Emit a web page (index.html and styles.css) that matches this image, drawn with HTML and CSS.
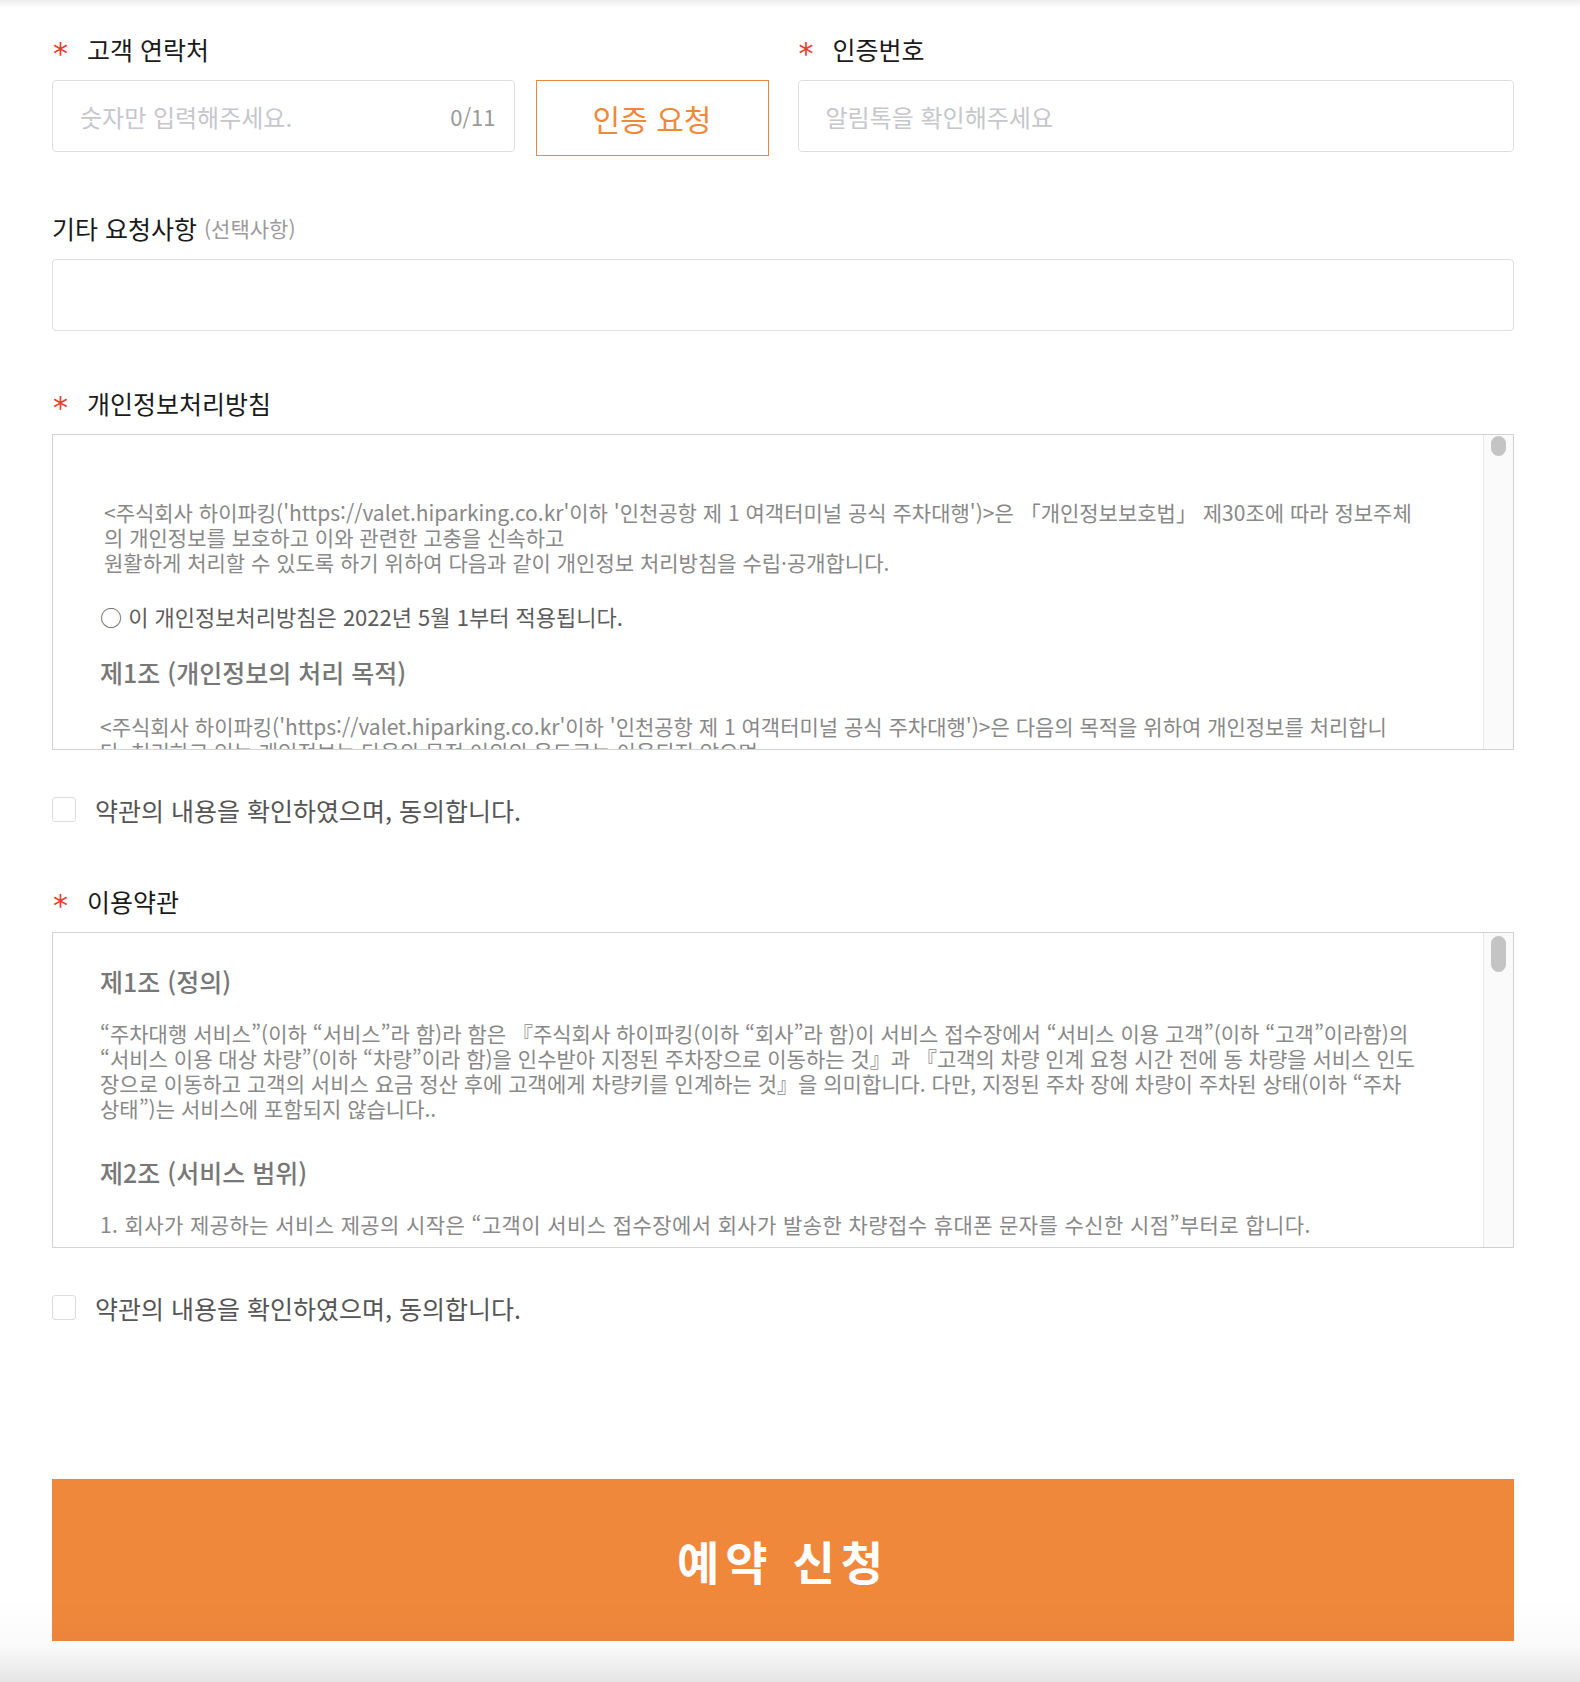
FILE: index.html
```html
<!DOCTYPE html>
<html lang="ko">
<head>
    <meta charset="UTF-8">
    <meta name="viewport" content="width=device-width, initial-scale=1.0">
    <title>주차대행 예약</title>
    <link rel="stylesheet" href="styles.css">
</head>
<body>
    <div class="page">
        <div class="row-two">
            <div class="field">
                <div class="label"><span class="req">*</span>고객 연락처</div>
                <div class="phone-row">
                    <div class="text-box">
                        <input type="text" placeholder="숫자만 입력해주세요.">
                        <span class="count">0/11</span>
                    </div>
                    <button class="auth-btn">인증 요청</button>
                </div>
            </div>
            <div class="field">
                <div class="label"><span class="req">*</span>인증번호</div>
                <div class="text-box">
                    <input type="text" placeholder="알림톡을 확인해주세요">
                </div>
            </div>
        </div>

        <div class="section">
            <div class="label">기타 요청사항 <span class="opt">(선택사항)</span></div>
            <div class="text-box">
                <input type="text">
            </div>
        </div>

        <div class="section">
            <div class="label"><span class="req">*</span>개인정보처리방침</div>
            <div class="terms-box">
                <div class="terms-text privacy">
                    <p class="intro">&lt;주식회사 하이파킹('https://valet.hiparking.co.kr'이하 '인천공항 제 1 여객터미널 공식 주차대행')&gt;은 「개인정보보호법」 제30조에 따라 정보주체<br>의 개인정보를 보호하고 이와 관련한 고충을 신속하고<br>원활하게 처리할 수 있도록 하기 위하여 다음과 같이 개인정보 처리방침을 수립·공개합니다.</p>
                    <p class="notice">○ 이 개인정보처리방침은 2022년 5월 1부터 적용됩니다.</p>
                    <h3>제1조 (개인정보의 처리 목적)</h3>
                    <p>&lt;주식회사 하이파킹('https://valet.hiparking.co.kr'이하 '인천공항 제 1 여객터미널 공식 주차대행')&gt;은 다음의 목적을 위하여 개인정보를 처리합니<br>다. 처리하고 있는 개인정보는 다음의 목적 이외의 용도로는 이용되지 않으며,<br>이용 목적이 변경되는 경우에는 별도의 동의를 받는 등 필요한 조치를 이행할 예정입니다.</p>
                </div>
                <div class="scroll-track"><div class="scroll-thumb"></div></div>
            </div>
            <label class="agree"><input type="checkbox"><span>약관의 내용을 확인하였으며, 동의합니다.</span></label>
        </div>

        <div class="section terms-section">
            <div class="label"><span class="req">*</span>이용약관</div>
            <div class="terms-box">
                <div class="terms-text">
                    <h3>제1조 (정의)</h3>
                    <p>“주차대행 서비스”(이하 “서비스”라 함)라 함은 『주식회사 하이파킹(이하 “회사”라 함)이 서비스 접수장에서 “서비스 이용 고객”(이하 “고객”이라함)의<br>“서비스 이용 대상 차량”(이하 “차량”이라 함)을 인수받아 지정된 주차장으로 이동하는 것』과 『고객의 차량 인계 요청 시간 전에 동 차량을 서비스 인도<br>장으로 이동하고 고객의 서비스 요금 정산 후에 고객에게 차량키를 인계하는 것』을 의미합니다. 다만, 지정된 주차 장에 차량이 주차된 상태(이하 “주차<br>상태”)는 서비스에 포함되지 않습니다..</p>
                    <h3>제2조 (서비스 범위)</h3>
                    <p class="wide">1. 회사가 제공하는 서비스 제공의 시작은 “고객이 서비스 접수장에서 회사가 발송한 차량접수 휴대폰 문자를 수신한 시점”부터로 합니다.</p>
                    <p>2. 회사가 제공하는 서비스의 종료는 고객에게 차량키를 인계한 시점으로 합니다.</p>
                </div>
                <div class="scroll-track"><div class="scroll-thumb long"></div></div>
            </div>
            <label class="agree"><input type="checkbox"><span>약관의 내용을 확인하였으며, 동의합니다.</span></label>
        </div>

        <button class="submit">예약 신청</button>
    </div>
</body>
</html>
```

FILE: styles.css
```css
* {
    margin: 0;
    padding: 0;
    box-sizing: border-box;
}

body {
    background: #fff;
    font-family: "Noto Sans CJK KR", "Noto Sans", sans-serif;
    color: #1a1a1a;
}

/* soft shade at the top and bottom edge of the view */
body::before, body::after {
    content: "";
    position: fixed;
    left: 0;
    right: 0;
    pointer-events: none;
}

body::before {
    top: 0;
    height: 8px;
    background: linear-gradient(rgba(0,0,0,0.07), rgba(0,0,0,0));
}

body::after {
    bottom: 0;
    height: 80px;
    background: linear-gradient(rgba(0,0,0,0) 0, rgba(0,0,0,0.02) 55%, rgba(0,0,0,0.1) 100%);
}

.page {
    padding: 32px 66px 0 52px;
}

.row-two {
    display: grid;
    grid-template-columns: 1fr 1fr;
    column-gap: 29px;
}

.label {
    display: flex;
    align-items: center;
    height: 34px;
    margin-bottom: 14px;
    font-size: 25px;
    line-height: 34px;
    white-space: nowrap;
}

.req {
    width: 35px;
    color: #ee3b2b;
    font-family: "DejaVu Sans", sans-serif;
    font-size: 30px;
    line-height: 1;
    padding-top: 10px;
    padding-left: 1px;
}

.opt {
    margin-left: 7px;
    font-size: 21px;
    color: #9a9a9a;
}

.phone-row {
    display: flex;
    align-items: flex-start;
    gap: 21px;
}

.phone-row .text-box {
    flex: 1;
}

.text-box {
    display: flex;
    align-items: center;
    height: 72px;
    border: 1px solid #dedee3;
    border-radius: 4px;
    padding: 0 18px 0 27px;
    background: #fff;
}

.text-box input {
    flex: 1;
    min-width: 0;
    border: none;
    outline: none;
    font-family: inherit;
    font-size: 24px;
    color: #333;
    background: transparent;
}

.text-box input::placeholder {
    color: #c6c6cc;
}

.count {
    font-size: 22px;
    color: #9a9a9a;
}

.auth-btn {
    width: 233px;
    height: 76px;
    border: 1px solid #f0883a;
    background: #fff;
    color: #f0883a;
    font-family: inherit;
    font-size: 30px;
    cursor: pointer;
}

.section {
    margin-top: 55px;
}

.terms-section {
    margin-top: 62px;
}

.terms-box {
    display: flex;
    height: 316px;
    border: 1px solid #d2d2d2;
    background: #fff;
}

.terms-text {
    flex: 1;
    overflow: hidden;
    padding: 31px 0 0 47px;
    white-space: nowrap;
    font-size: 21px;
    line-height: 25px;
    color: #888;
}

.terms-text h3 {
    font-size: 25px;
    line-height: 34px;
    font-weight: 500;
    color: #777;
    margin-bottom: 23px;
}

.terms-text p {
    margin-bottom: 34px;
}

.terms-text .wide {
    letter-spacing: 0.4px;
}

.privacy {
    padding-top: 65px;
}

.privacy .intro {
    margin-left: 4px;
    margin-bottom: 29px;
}

.privacy .notice {
    color: #5c5c5c;
    font-size: 22px;
    margin-bottom: 26px;
}

.privacy h3 {
    margin-bottom: 25px;
}

.scroll-track {
    width: 30px;
    background: #fafafa;
    border-left: 1px solid #e8e8e8;
    padding-top: 1px;
}

.scroll-thumb {
    width: 15px;
    height: 20px;
    margin: 0 auto;
    border-radius: 8px;
    background: #c4c4c4;
}

.scroll-thumb.long {
    height: 36px;
    margin-top: 2px;
}

.agree {
    display: flex;
    align-items: center;
    gap: 19px;
    margin-top: 47px;
    height: 25px;
    font-size: 25px;
    color: #555;
    cursor: pointer;
}

.agree input {
    appearance: none;
    width: 24px;
    height: 25px;
    border: 1px solid #dcdcdc;
    border-radius: 3px;
    background: #fff;
}

.submit {
    display: block;
    width: 100%;
    height: 162px;
    margin-top: 159px;
    border: none;
    background: #f0883c;
    color: #fff;
    font-family: inherit;
    font-size: 46px;
    font-weight: 700;
    letter-spacing: 6px;
    cursor: pointer;
}
```
